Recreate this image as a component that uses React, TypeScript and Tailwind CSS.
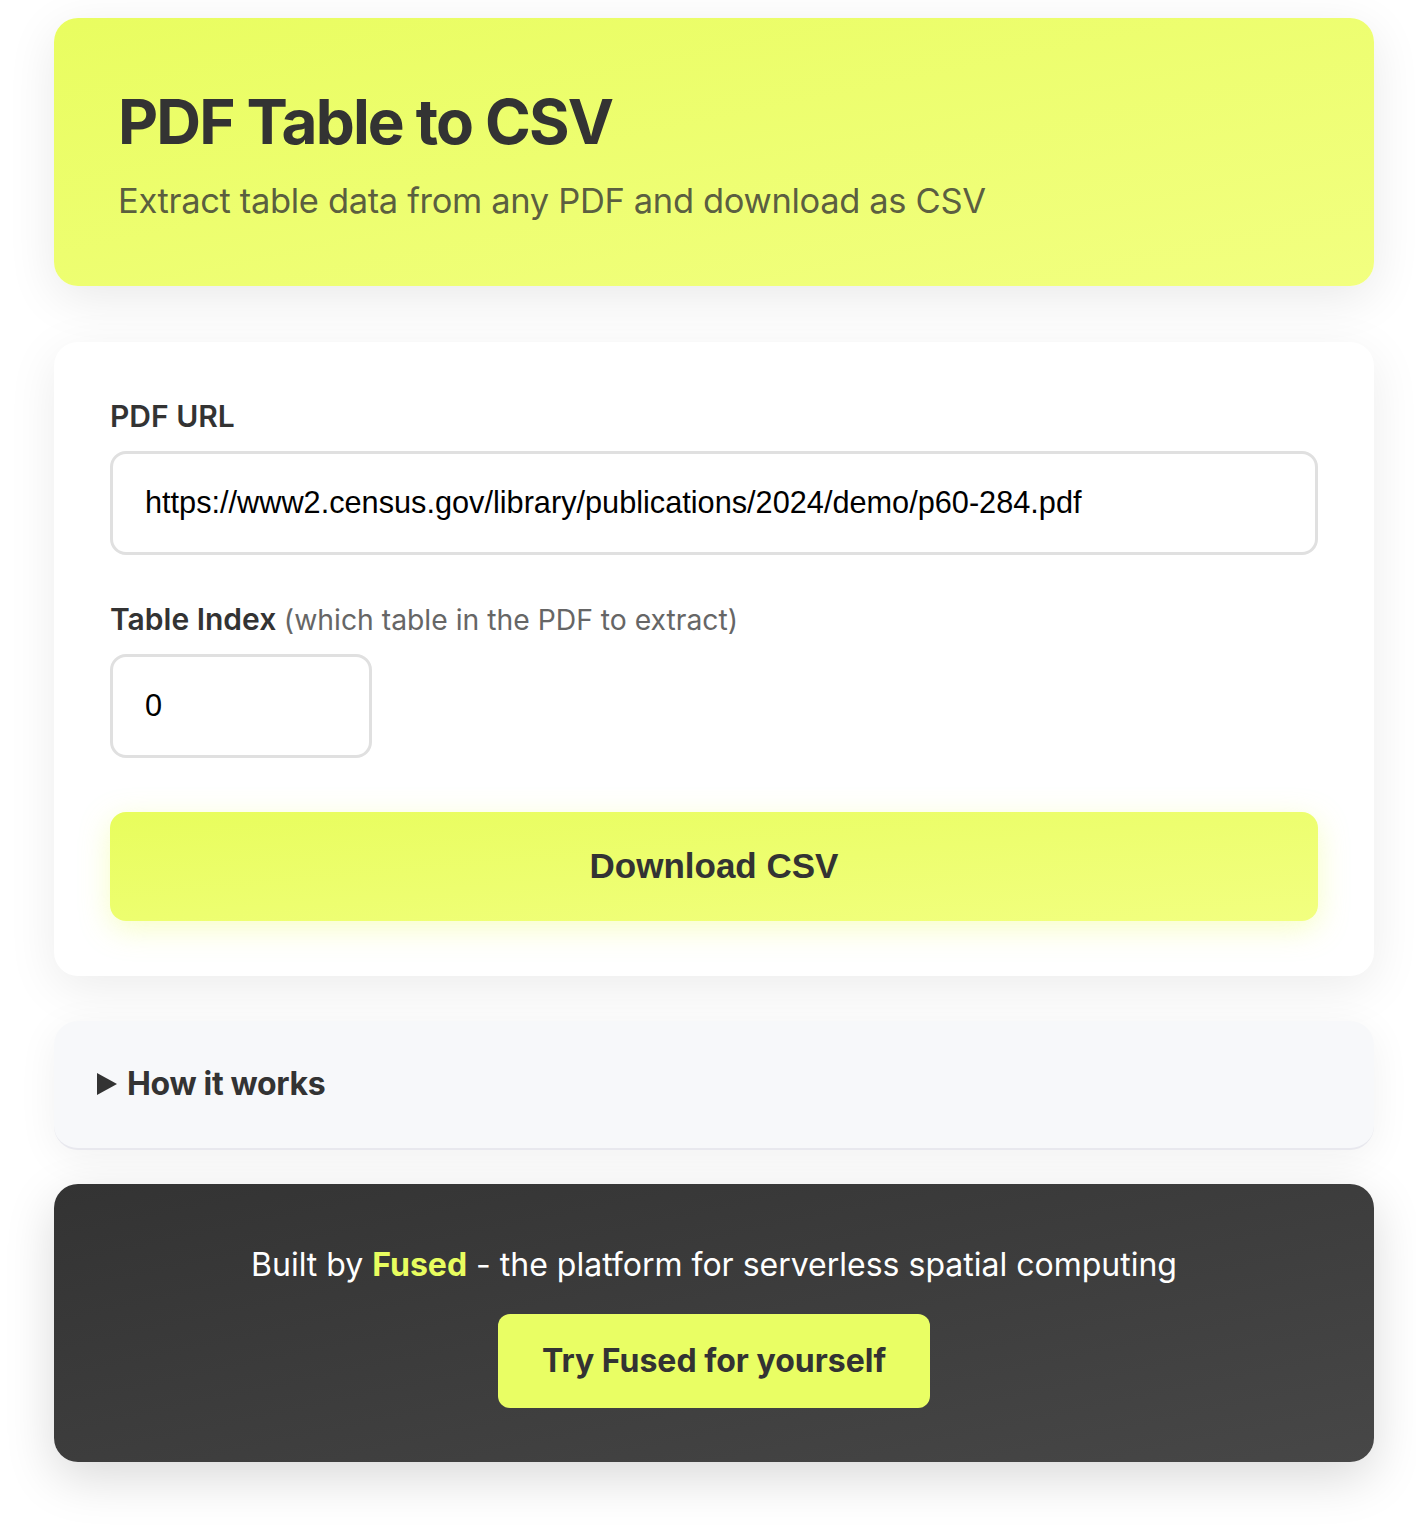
import React from 'react';

const sans = "font-['Inter','Noto_Sans',sans-serif]";

export default function App() {
  const [url, setUrl] = React.useState('https://www2.census.gov/library/publications/2024/demo/p60-284.pdf');
  const [tableIndex, setTableIndex] = React.useState('0');

  return (
    <div className={`min-h-screen bg-white ${sans} text-[#333]`}>
      <div className="ml-[54px] w-[1320px] pt-[18px] pb-[75px] flex flex-col">
        {/* Header */}
        <div className="rounded-[24px] bg-gradient-to-br from-[#e9fd60] to-[#f2ff80] px-[64px] pt-[67px] pb-[64px] shadow-[0_12px_50px_rgba(0,0,0,0.09)]">
          <h1 className="text-[62px] leading-[1.2] font-bold tracking-[-0.03em] text-[#333]">PDF Table to CSV</h1>
          <p className="mt-[21px] text-[34.5px] leading-[1.2] tracking-[-0.01em] text-[#333]/80">
            Extract table data from any PDF and download as CSV
          </p>
        </div>

        {/* Form card */}
        <div className="mt-[56px] rounded-[24px] bg-white px-[56px] pt-[56px] pb-[55px] shadow-[0_12px_50px_rgba(0,0,0,0.08)]">
          <label className="block text-[30px] leading-[36px] font-semibold">PDF URL</label>
          <input
            value={url}
            onChange={(e) => setUrl(e.target.value)}
            className="mt-[17px] block w-full h-[104px] rounded-[16px] border-[3px] border-[#e0e0e0] px-[32px] text-[30.7px] text-black font-['Liberation_Sans',Arial,sans-serif] outline-none"
          />

          <label className="mt-[46px] block text-[30px] leading-[36px] font-semibold">
            Table Index <span className="text-[28.3px] font-normal text-[#666]">(which table in the PDF to extract)</span>
          </label>
          <input
            value={tableIndex}
            onChange={(e) => setTableIndex(e.target.value)}
            className="mt-[16px] block w-[262px] h-[104px] rounded-[16px] border-[3px] border-[#e0e0e0] px-[32px] text-[30.7px] text-black font-['Liberation_Sans',Arial,sans-serif] outline-none"
          />

          <button className="mt-[54px] w-full h-[109px] rounded-[16px] bg-gradient-to-br from-[#e8fd5c] to-[#f2ff80] text-[35px] font-bold text-[#333] font-['Liberation_Sans',Arial,sans-serif] shadow-[0_8px_30px_rgba(232,252,92,0.35)]">
            Download CSV
          </button>
        </div>

        {/* How it works */}
        <div className="mt-[45px] rounded-[24px] border-b-2 border-[#e8e8ee] bg-[#f7f8fa] shadow-[0_8px_40px_rgba(0,0,0,0.06)]">
          <div className="flex items-center h-[127px] pl-[43px]">
            <svg width="20" height="22" viewBox="0 0 20 22" className="mr-[10px] fill-[#333]">
              <path d="M0 0 L20 11 L0 22 Z" />
            </svg>
            <span className="text-[32px] font-bold tracking-[-0.01em]">How it works</span>
          </div>
        </div>

        {/* Footer */}
        <div className="mt-[34px] rounded-[24px] bg-gradient-to-br from-[#333] to-[#474747] flex flex-col items-center pt-[61px] pb-[54px] shadow-[0_16px_50px_rgba(0,0,0,0.15)]">
          <p className="text-[32px] leading-[40px] text-white">
            Built by <span className="font-bold text-[#e8fd5f]">Fused</span> - the platform for serverless spatial computing
          </p>
          <a className="mt-[29px] flex items-center justify-center w-[432px] h-[94px] rounded-[12px] bg-[#e9fe64] text-[32px] font-bold text-[#333]">
            Try Fused for yourself
          </a>
        </div>
      </div>
    </div>
  );
}
